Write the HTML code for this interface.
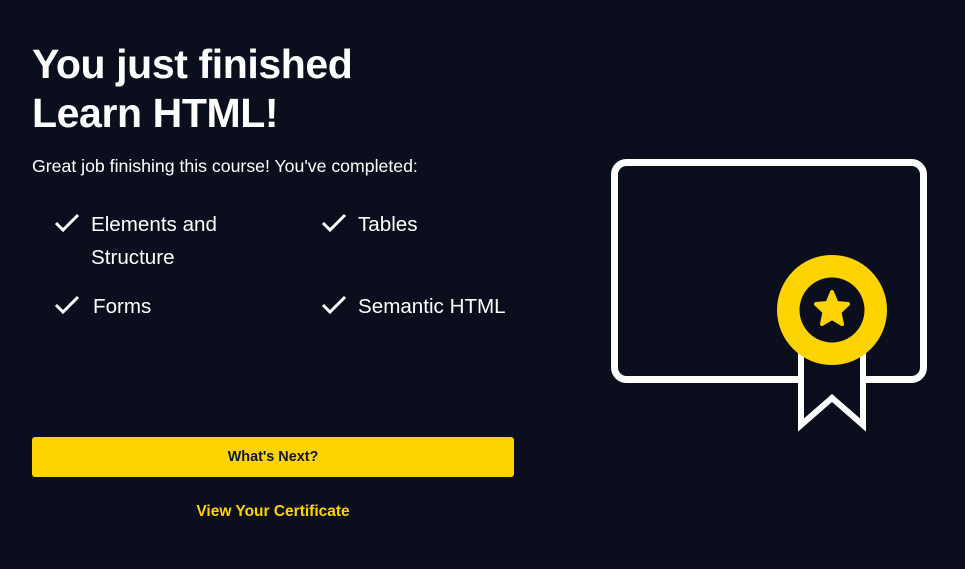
<!DOCTYPE html>
<html><head><meta charset="utf-8"><style>
*{margin:0;padding:0;box-sizing:border-box}
body{width:965px;height:569px;background:#0b0e1c;color:#fff;font-family:"Liberation Sans",sans-serif;position:relative;overflow:hidden}
h1{position:absolute;left:32px;top:40px;font-size:41px;line-height:49px;font-weight:bold;letter-spacing:-0.4px}
.sub{position:absolute;left:32px;top:156px;font-size:17.7px}
.it{position:absolute;font-size:20.6px;line-height:33px}
.it svg{position:absolute;left:-37px;top:4px}
.btn{position:absolute;left:32px;top:437px;width:482px;height:40px;background:#ffd300;border-radius:3px;color:#10162f;font-weight:bold;font-size:14.4px;text-align:center;line-height:40px}
.link{position:absolute;left:32px;width:482px;top:503px;text-align:center;color:#ffd300;font-weight:bold;font-size:15.5px}
</style></head><body>
<h1>You just finished<br>Learn HTML!</h1>
<div class="sub">Great job finishing this course! You've completed:</div>
<div class="it" style="left:91px;top:208px">Elements and<br>Structure<svg width="26" height="22" viewBox="0 0 26 22"><path d="M2 11l7 7L24 3" stroke="#fff" stroke-width="3" fill="none"/></svg></div>
<div class="it" style="left:358px;top:208px">Tables<svg width="26" height="22" viewBox="0 0 26 22"><path d="M2 11l7 7L24 3" stroke="#fff" stroke-width="3" fill="none"/></svg></div>
<div class="it" style="left:93px;top:290px">Forms<svg style="left:-39px" width="26" height="22" viewBox="0 0 26 22"><path d="M2 11l7 7L24 3" stroke="#fff" stroke-width="3" fill="none"/></svg></div>
<div class="it" style="left:358px;top:290px">Semantic HTML<svg width="26" height="22" viewBox="0 0 26 22"><path d="M2 11l7 7L24 3" stroke="#fff" stroke-width="3" fill="none"/></svg></div>
<div class="btn">What's Next?</div>
<div class="link">View Your Certificate</div>
<svg style="position:absolute;left:0;top:0" width="965" height="569">
<rect x="614.5" y="162.5" width="309" height="217" rx="12" fill="none" stroke="#fff" stroke-width="7"/>
<path d="M801 350V425L832 398L863 425V350Z" fill="#0b0e1c" stroke="#fff" stroke-width="6"/>
<circle cx="832" cy="310" r="55" fill="#ffd300"/>
<circle cx="832" cy="310" r="32.5" fill="#0b0e1c"/>
<polygon points="832,292 836.5,303 848,304 839.5,312 842,324 832,318 822,324 824.5,312 816,304 827.5,303" fill="#ffd300" stroke="#ffd300" stroke-width="4" stroke-linejoin="round"/>
</svg>
</body></html>
